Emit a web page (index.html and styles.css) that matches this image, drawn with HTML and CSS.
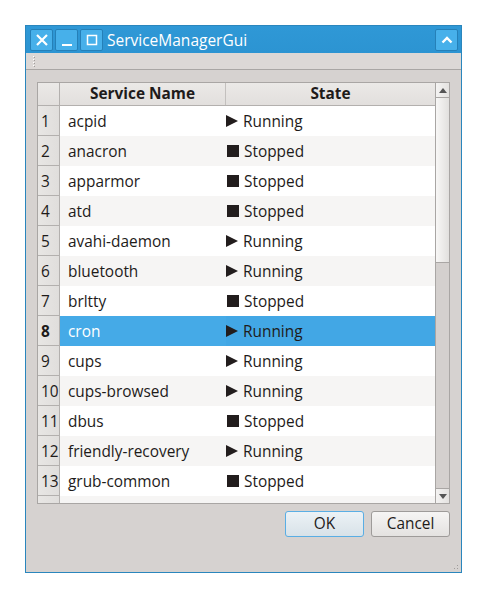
FILE: index.html
```html
<!DOCTYPE html>
<html>
<head>
<meta charset="utf-8">
<link rel="stylesheet" href="styles.css">
</head>
<body>
<div class="window">
  <div class="titlebar">
    <div class="tbtn"><svg width="14" height="14" viewBox="0 0 14 14"><path d="M2 2 L12 12 M12 2 L2 12" stroke="#fff" stroke-width="2.2"/></svg></div>
    <div class="tbtn"><svg width="14" height="14" viewBox="0 0 14 14"><path d="M2 12 H12" stroke="#fff" stroke-width="2"/></svg></div>
    <div class="tbtn"><svg width="14" height="14" viewBox="0 0 14 14"><rect x="2.5" y="2.5" width="9" height="9" fill="none" stroke="#fff" stroke-width="1.5"/></svg></div>
    <div class="title">ServiceManagerGui</div>
    <div class="tbtn up"><svg width="14" height="14" viewBox="0 0 14 14"><path d="M2.5 9.5 L7 5 L11.5 9.5" fill="none" stroke="#fff" stroke-width="2.4"/></svg></div>
  </div>
  <div class="toolbar"><div class="handle"></div></div>
  <div class="content">
    <div class="table">
      <div class="grid">
        <div class="hrow">
          <div class="corner"></div>
          <div class="hcell name">Service Name</div>
          <div class="hcell state">State</div>
        </div>
        <div class="row"><div class="num">1</div><div class="cell name">acpid</div><div class="cell state"><span class="run"></span>Running</div></div>
        <div class="row alt"><div class="num">2</div><div class="cell name">anacron</div><div class="cell state"><span class="stop"></span>Stopped</div></div>
        <div class="row"><div class="num">3</div><div class="cell name">apparmor</div><div class="cell state"><span class="stop"></span>Stopped</div></div>
        <div class="row alt"><div class="num">4</div><div class="cell name">atd</div><div class="cell state"><span class="stop"></span>Stopped</div></div>
        <div class="row"><div class="num">5</div><div class="cell name">avahi-daemon</div><div class="cell state"><span class="run"></span>Running</div></div>
        <div class="row alt"><div class="num">6</div><div class="cell name">bluetooth</div><div class="cell state"><span class="run"></span>Running</div></div>
        <div class="row"><div class="num">7</div><div class="cell name">brltty</div><div class="cell state"><span class="stop"></span>Stopped</div></div>
        <div class="row sel"><div class="num">8</div><div class="cell name">cron</div><div class="cell state"><span class="run"></span>Running</div></div>
        <div class="row"><div class="num">9</div><div class="cell name">cups</div><div class="cell state"><span class="run"></span>Running</div></div>
        <div class="row alt"><div class="num">10</div><div class="cell name">cups-browsed</div><div class="cell state"><span class="run"></span>Running</div></div>
        <div class="row"><div class="num">11</div><div class="cell name">dbus</div><div class="cell state"><span class="stop"></span>Stopped</div></div>
        <div class="row alt"><div class="num">12</div><div class="cell name">friendly-recovery</div><div class="cell state"><span class="run"></span>Running</div></div>
        <div class="row"><div class="num">13</div><div class="cell name">grub-common</div><div class="cell state"><span class="stop"></span>Stopped</div></div>
        <div class="row alt"><div class="num"></div><div class="cell name"></div><div class="cell state"></div></div>
      </div>
      <div class="vscroll">
        <div class="arrow"><svg width="8" height="5" viewBox="0 0 8 5"><path d="M0 5 L4 0 L8 5Z" fill="#555"/></svg></div>
        <div class="thumb"></div>
        <div class="track"></div>
        <div class="arrow"><svg width="8" height="5" viewBox="0 0 8 5"><path d="M0 0 L4 5 L8 0Z" fill="#555"/></svg></div>
      </div>
    </div>
    <div class="buttons">
      <button class="btn ok">OK</button>
      <button class="btn">Cancel</button>
    </div>
    <div class="grip"></div>
  </div>
</div>
</body>
</html>
```
FILE: styles.css
```css
* { box-sizing: border-box; }
html, body { margin: 0; padding: 0; background: #ffffff; }
body {
  font-family: "Open Sans", "Noto Sans", sans-serif;
  font-size: 15.4px;
  color: #1e1b1a;
}
.window {
  margin: 25px 0 0 25px;
  width: 437px;
  height: 548px;
  border: 1px solid #2a86bd;
  display: flex;
  flex-direction: column;
  background: #d6d2d0;
}
.titlebar {
  height: 27px;
  flex: none;
  background: linear-gradient(#2f98d6, #2c94d2);
  display: flex;
  align-items: flex-start;
  padding: 3px 3px 0 4px;
  gap: 2px;
}
.tbtn {
  width: 23px;
  height: 22px;
  border: 1px solid #2580b8;
  border-radius: 2px;
  background: #47b0ea;
  display: flex;
  align-items: center;
  justify-content: center;
}
.title {
  flex: 1;
  color: #ffffff;
  font-size: 15.5px;
  line-height: 22px;
  margin-left: 2px;
}
.toolbar {
  height: 17px;
  flex: none;
  background: #dcd8d6;
  border-bottom: 1px solid #a9a6a4;
  padding: 2px 0 0 6px;
}
.handle {
  width: 3px;
  height: 12px;
  background-image: radial-gradient(#ffffff 0.7px, transparent 0.8px), radial-gradient(#a09c9a 0.7px, transparent 0.8px);
  background-size: 3px 3px, 3px 3px;
  background-position: 0 0, 1px 1px;
}
.content {
  flex: 1;
  display: flex;
  flex-direction: column;
  padding: 12px 11px 0 11px;
  position: relative;
}
.table {
  height: 422px;
  border: 1px solid #a9a6a4;
  display: flex;
  background: #ffffff;
}
.grid {
  flex: 1;
  overflow: hidden;
  display: flex;
  flex-direction: column;
}
.hrow {
  height: 23px;
  flex: none;
  display: flex;
  background: linear-gradient(#ebe9e7, #e2dfdd);
  border-bottom: 1px solid #b3b0ae;
}
.corner { width: 22px; border-right: 1px solid #b3b0ae; }
.hcell {
  font-weight: bold;
  text-align: center;
  line-height: 21px;
}
.hcell.name { width: 166px; border-right: 1px solid #c3c0be; }
.hcell.state { flex: 1; }
.row {
  height: 30px;
  flex: none;
  display: flex;
  background: #ffffff;
}
.row.alt { background: #f6f5f4; }
.num {
  width: 22px;
  flex: none;
  background: linear-gradient(90deg, #e8e6e4, #e0dedc);
  border-right: 1px solid #b3b0ae;
  border-bottom: 1px solid #b3b0ae;
  padding-left: 3px;
  line-height: 31px;
  overflow: hidden;
}
.cell.name { width: 166px; padding-left: 8px; line-height: 31px; overflow: hidden; }
.cell.state { flex: 1; display: flex; align-items: center; gap: 5px; line-height: 29px; }
.row.sel .cell { background: #42a7e5; color: #ffffff; }
.row.sel .cell.name { background: #45aae7; }
.row.sel .num { font-weight: bold; }
.row.sel .cell.state { color: #1e1b1a; }
.run {
  width: 0; height: 0;
  border-top: 6.5px solid transparent;
  border-bottom: 6.5px solid transparent;
  border-left: 12px solid #221d1d;
  margin-top: -1px;
}
.stop {
  width: 12px; height: 12px;
  background: #221d1d;
  margin-left: 1px;
  margin-top: -1px;
}
.vscroll {
  width: 14px;
  flex: none;
  border-left: 1px solid #a9a6a4;
  display: flex;
  flex-direction: column;
  background: #d4d0ce;
}
.arrow {
  height: 14px;
  flex: none;
  background: linear-gradient(90deg, #f4f3f2, #e4e2e0);
  display: flex;
  align-items: center;
  justify-content: center;
}
.thumb {
  height: 166px;
  flex: none;
  background: linear-gradient(90deg, #f8f7f6, #e2e0de);
  border-top: 1px solid #a9a6a4;
  border-bottom: 1px solid #a9a6a4;
}
.track { flex: 1; border-bottom: 1px solid #a9a6a4; }
.buttons {
  display: flex;
  justify-content: flex-end;
  gap: 7px;
  margin-top: 7px;
}
.btn {
  width: 79px;
  height: 26px;
  font-family: inherit;
  font-size: 15.4px;
  color: #1e1b1a;
  border: 1px solid #9e9b99;
  border-radius: 3px;
  background: linear-gradient(#f6f5f4, #e4e2e0);
  padding: 0 0 1px 0;
}
.btn.ok {
  border-color: #5aaee4;
  background: linear-gradient(#ecf2f6, #d8e2e8);
}
.grip {
  position: absolute;
  right: 1px;
  bottom: 1px;
  width: 10px;
  height: 10px;
  background-image: radial-gradient(#a09c9a 0.7px, transparent 0.8px);
  background-size: 3px 3px;
  clip-path: polygon(100% 0, 100% 100%, 0 100%);
}
```
